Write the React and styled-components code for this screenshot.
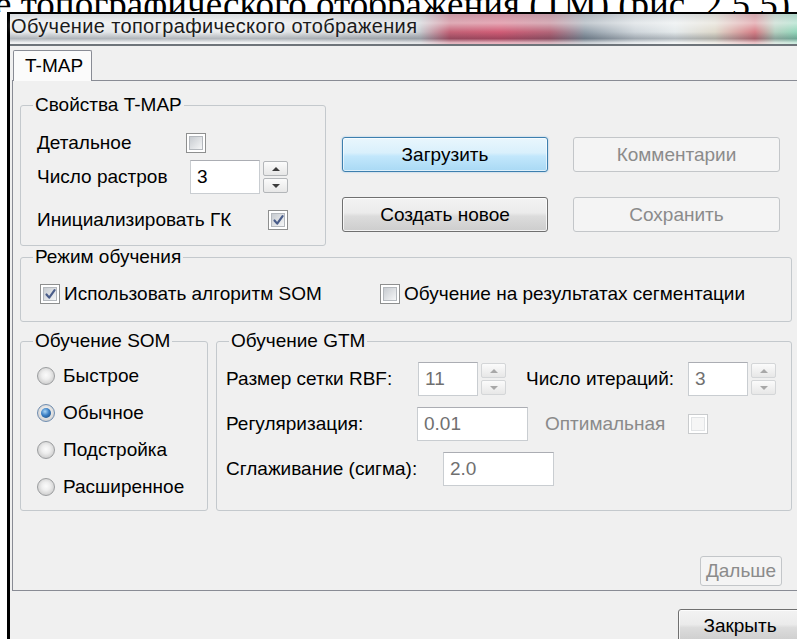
import React from "react";
import styled, { createGlobalStyle, css } from "styled-components";

const GlobalStyle = createGlobalStyle`
  html, body {
    margin: 0;
    padding: 0;
    background: #fff;
    overflow: hidden;
  }
`;

const ui = `"Liberation Sans", Arial, sans-serif`;

const Page = styled.div`
  width: 797px;
  height: 639px;
  overflow: hidden;
  background: #fff;
  font-family: ${ui};
  font-size: 19px;
  color: #000;
`;

// line of the document text that sits behind the window frame
const Caption = styled.div`
  height: 12px;
  overflow: hidden;
  white-space: nowrap;
  font-family: "Liberation Serif", "Times New Roman", serif;
  font-size: 37px;
  line-height: 37px;

  span {
    display: block;
    margin: -14px 0 0 -5px;
  }
`;

// the window runs past the right edge of the page, so it has no right border here
const Frame = styled.div`
  width: 787px;
  margin-left: 7px;
  border-top: 2px solid #000;
  border-left: 3px solid #000;
`;

const TitleBar = styled.div`
  height: 29px;
  padding: 1px 0 0 1px;
  font-size: 20px;
  line-height: 23px;
  letter-spacing: 0.35px;
  color: #1b1b1b;
  text-shadow: 0 0 5px rgba(255, 255, 255, 0.95);
  border-bottom: 2px solid #6e747a;
  background:
    linear-gradient(
      to bottom,
      rgba(210, 214, 218, 0.55) 0%,
      rgba(255, 255, 255, 0.55) 30%,
      rgba(255, 255, 255, 0.15) 60%,
      rgba(70, 80, 92, 0.3) 82%,
      rgba(255, 255, 255, 0.6) 96%
    ),
    linear-gradient(
      to right,
      #dcdfe2 0px,
      #e2e5e7 240px,
      #cdd1d4 330px,
      #bcc0c5 410px,
      #b8475f 440px,
      #c8405e 490px,
      #a64c62 540px,
      #7e8c99 575px,
      #c6ced4 625px,
      #e0e6e8 665px,
      #d8d2c2 705px,
      #cf6872 745px,
      #a8c8b6 765px,
      #7fcfae 787px
    );
`;

const Body = styled.div`
  height: 593px;
  box-sizing: border-box;
  padding: 4px 0 0 2px;
  background: #f0f0f0;
`;

const Tab = styled.div`
  position: relative;
  z-index: 1;
  width: 79px;
  height: 31px;
  box-sizing: border-box;
  margin: 0 0 -1px 1px;
  padding-left: 11px;
  display: flex;
  align-items: center;
  border: 1px solid #898c95;
  border-bottom: none;
  border-radius: 2px 2px 0 0;
  background: #fbfbfb;
`;

const Panel = styled.div`
  height: 511px;
  box-sizing: border-box;
  padding: 0 0 0 7px;
  display: flex;
  flex-direction: column;
  border: 1px solid #898c95;
  border-right: none;
  background: #f0f0f0;
`;

const Row = styled.div`
  display: flex;
  align-items: flex-start;
  gap: ${({ $gap }) => $gap || 0}px;
  margin-top: ${({ $top }) => $top || 0}px;
`;

const Group = styled.fieldset`
  flex: none;
  margin: 0;
  padding: 0;
  min-width: 0;
  box-sizing: border-box;
  width: ${({ $w }) => $w}px;
  height: ${({ $h }) => $h}px;
  border: 1px solid #c4c9cd;
  border-radius: 3px;
`;

const Legend = styled.legend`
  margin-left: 12px;
  padding: 0 2px;
  line-height: 22px;
`;

const Line = styled.div`
  display: flex;
  align-items: center;
  height: ${({ $h }) => $h || 24}px;
  margin-top: ${({ $top }) => $top || 0}px;
  padding-left: ${({ $pad }) => $pad || 0}px;
`;

const Label = styled.span`
  flex: none;
  width: ${({ $w }) => $w}px;
  margin-left: ${({ $ml }) => $ml || 0}px;
  white-space: nowrap;
  color: ${({ $dim }) => ($dim ? "#8a8a8a" : "#000")};
`;

const Field = styled.div`
  flex: none;
  width: ${({ $w }) => $w}px;
  height: 34px;
  box-sizing: border-box;
  padding-left: 6px;
  display: flex;
  align-items: center;
  background: #fff;
  border: 1px solid #c9cdd1;
  border-top-color: #abadb3;
  color: ${({ $dim }) => ($dim ? "#707070" : "#000")};
`;

const Spinner = styled.div`
  flex: none;
  width: 25px;
  height: 32px;
  margin-left: 3px;
  display: flex;
  flex-direction: column;
  gap: 2px;
`;

const SpinButton = styled.div`
  flex: 1;
  display: flex;
  align-items: center;
  justify-content: center;
  border: 1px solid ${({ $dim }) => ($dim ? "#d4d6d8" : "#b3b6b9")};
  border-radius: 2px;
  background: linear-gradient(to bottom, #fbfbfb, #e7e7e7);

  &::after {
    content: "";
    border-left: 4px solid transparent;
    border-right: 4px solid transparent;
    ${({ $down, $dim }) =>
      $down
        ? `border-top: 4px solid ${$dim ? "#a8a8a8" : "#3c3c3c"};`
        : `border-bottom: 4px solid ${$dim ? "#a8a8a8" : "#3c3c3c"};`}
  }
`;

const Box = styled.span`
  flex: none;
  position: relative;
  width: 20px;
  height: 20px;
  box-sizing: border-box;
  display: inline-flex;
  align-items: center;
  justify-content: center;
  border: 1px solid ${({ $dim }) => ($dim ? "#c9cbcd" : "#8e8f8f")};
  background: #fff;

  &::before {
    content: "";
    position: absolute;
    inset: 2px;
    border: 1px solid ${({ $dim }) => ($dim ? "#e2e4e6" : "#b4b8bd")};
    background: ${({ $dim }) =>
      $dim ? "#f6f6f6" : "linear-gradient(135deg, #c7cbd0, #f5f6f7)"};
  }

  svg {
    position: relative;
  }
`;

const Radio = styled.span`
  flex: none;
  position: relative;
  width: 18px;
  height: 18px;
  box-sizing: border-box;
  border-radius: 50%;
  border: 1px solid #9b9d9f;
  background: radial-gradient(
    circle at 50% 45%,
    #fbfbfb 0,
    #eeeeee 35%,
    #cfcfcf 75%,
    #c2c2c2 100%
  );

  ${({ $on }) =>
    $on &&
    css`
      border-color: #6f8db0;
      &::after {
        content: "";
        position: absolute;
        inset: 3px;
        border-radius: 50%;
        background: radial-gradient(
          circle at 40% 35%,
          #a9d6f6 0,
          #3b7fc4 45%,
          #143f6e 100%
        );
      }
    `}
`;

const Choice = styled.label`
  display: flex;
  align-items: center;
  gap: ${({ $gap }) => $gap || 4}px;
  width: ${({ $w }) => ($w ? `${$w}px` : "auto")};
  height: 22px;
  white-space: nowrap;
`;

const ButtonGrid = styled.div`
  display: grid;
  grid-template-columns: 206px 207px;
  grid-auto-rows: 35px;
  column-gap: 25px;
  row-gap: 25px;
  margin: 43px 0 0 16px;
`;

const Button = styled.button`
  flex: none;
  box-sizing: border-box;
  width: ${({ $w }) => ($w ? `${$w}px` : "100%")};
  height: ${({ $h }) => $h || 35}px;
  padding: 0;
  font-family: ${ui};
  font-size: 19px;
  color: #000;
  border: 1px solid #707070;
  border-radius: 3px;
  box-shadow: inset 0 0 0 1px rgba(255, 255, 255, 0.75);
  background: linear-gradient(
    to bottom,
    #f3f3f3 0%,
    #ebebeb 45%,
    #dcdcdc 55%,
    #cdcdcd 100%
  );

  ${({ $focus }) =>
    $focus &&
    css`
      border-color: #3d7fae;
      box-shadow: inset 0 0 0 1px rgba(255, 255, 255, 0.6),
        0 0 2px rgba(80, 160, 220, 0.6);
      background: linear-gradient(
        to bottom,
        #e9f6fd 0%,
        #d9f0fc 45%,
        #c2e7fc 55%,
        #a9d9f4 100%
      );
    `}

  ${({ disabled }) =>
    disabled &&
    css`
      color: #8b8b8b;
      border-color: #c3c6c9;
      box-shadow: none;
      background: #f4f4f4;
    `}
`;

const Footer = styled.div`
  display: flex;
  justify-content: flex-end;
  margin-top: ${({ $top }) => ($top === undefined ? "auto" : `${$top}px`)};
  padding-right: ${({ $right }) => $right || 0}px;
  padding-bottom: ${({ $bottom }) => $bottom || 0}px;
`;

// the close button is cut by the page edge
const CloseButton = styled(Button)`
  margin-right: -5px;
`;

const Tick = () => (
  <svg width="13" height="13" viewBox="0 0 13 13">
    <path
      d="M2.5 6.5 L5.2 9.6 L10.6 2.2"
      fill="none"
      stroke="#4a5d8a"
      strokeWidth="2.2"
      strokeLinecap="round"
      strokeLinejoin="round"
    />
  </svg>
);

const CheckBox = ({ checked, dim }) => (
  <Box $dim={dim}>{checked && <Tick />}</Box>
);

const Spin = ({ dim }) => (
  <Spinner>
    <SpinButton $dim={dim} />
    <SpinButton $dim={dim} $down />
  </Spinner>
);

const somModes = [
  { name: "Быстрое", on: false },
  { name: "Обычное", on: true },
  { name: "Подстройка", on: false },
  { name: "Расширенное", on: false },
];

export default function App() {
  return (
    <Page>
      <GlobalStyle />
      <Caption>
        <span>е топографического отображения (ТМ) (рис. 2.5.5)</span>
      </Caption>
      <Frame>
        <TitleBar>Обучение топографического отображения</TitleBar>
        <Body>
          <Tab>T-MAP</Tab>
          <Panel>
            <Row $top={13}>
              <Group $w={306} $h={152}>
                <Legend>Свойства T-MAP</Legend>
                <Line $top={15} $pad={16}>
                  <Label $w={149}>Детальное</Label>
                  <CheckBox />
                </Line>
                <Line $top={5} $h={34} $pad={16}>
                  <Label $w={153}>Число растров</Label>
                  <Field $w={70}>3</Field>
                  <Spin />
                </Line>
                <Line $top={14} $pad={16}>
                  <Label $w={231}>Инициализировать ГК</Label>
                  <CheckBox checked />
                </Line>
              </Group>
              <ButtonGrid>
                <Button $focus>Загрузить</Button>
                <Button disabled>Комментарии</Button>
                <Button>Создать новое</Button>
                <Button disabled>Сохранить</Button>
              </ButtonGrid>
            </Row>

            <Row>
              <Group $w={772} $h={76}>
                <Legend>Режим обучения</Legend>
                <Line $top={14} $pad={19}>
                  <Choice $w={340}>
                    <CheckBox checked />
                    Использовать алгоритм SOM
                  </Choice>
                  <Choice>
                    <CheckBox />
                    Обучение на результатах сегментации
                  </Choice>
                </Line>
              </Group>
            </Row>

            <Row $top={8} $gap={8}>
              <Group $w={188} $h={181}>
                <Legend>Обучение SOM</Legend>
                {somModes.map((m, i) => (
                  <Line key={m.name} $h={22} $top={i === 0 ? 13 : 15} $pad={16}>
                    <Choice $gap={8}>
                      <Radio $on={m.on} />
                      {m.name}
                    </Choice>
                  </Line>
                ))}
              </Group>
              <Group $w={576} $h={181}>
                <Legend>Обучение GTM</Legend>
                <Line $top={10} $h={34} $pad={9}>
                  <Label $w={192}>Размер сетки RBF:</Label>
                  <Field $w={60} $dim>11</Field>
                  <Spin dim />
                  <Label $w={162} $ml={20}>Число итераций:</Label>
                  <Field $w={60} $dim>3</Field>
                  <Spin dim />
                </Line>
                <Line $top={11} $h={34} $pad={9}>
                  <Label $w={191}>Регуляризация:</Label>
                  <Field $w={111} $dim>0.01</Field>
                  <Label $w={143} $ml={17} $dim>Оптимальная</Label>
                  <CheckBox dim />
                </Line>
                <Line $top={11} $h={34} $pad={9}>
                  <Label $w={217}>Сглаживание (сигма):</Label>
                  <Field $w={111} $dim>2.0</Field>
                </Line>
              </Group>
            </Row>

            <Footer $right={15} $bottom={4}>
              <Button disabled $w={82} $h={30}>
                Дальше
              </Button>
            </Footer>
          </Panel>
          <Footer $top={18}>
            <CloseButton $w={124} $h={34}>
              Закрыть
            </CloseButton>
          </Footer>
        </Body>
      </Frame>
    </Page>
  );
}
